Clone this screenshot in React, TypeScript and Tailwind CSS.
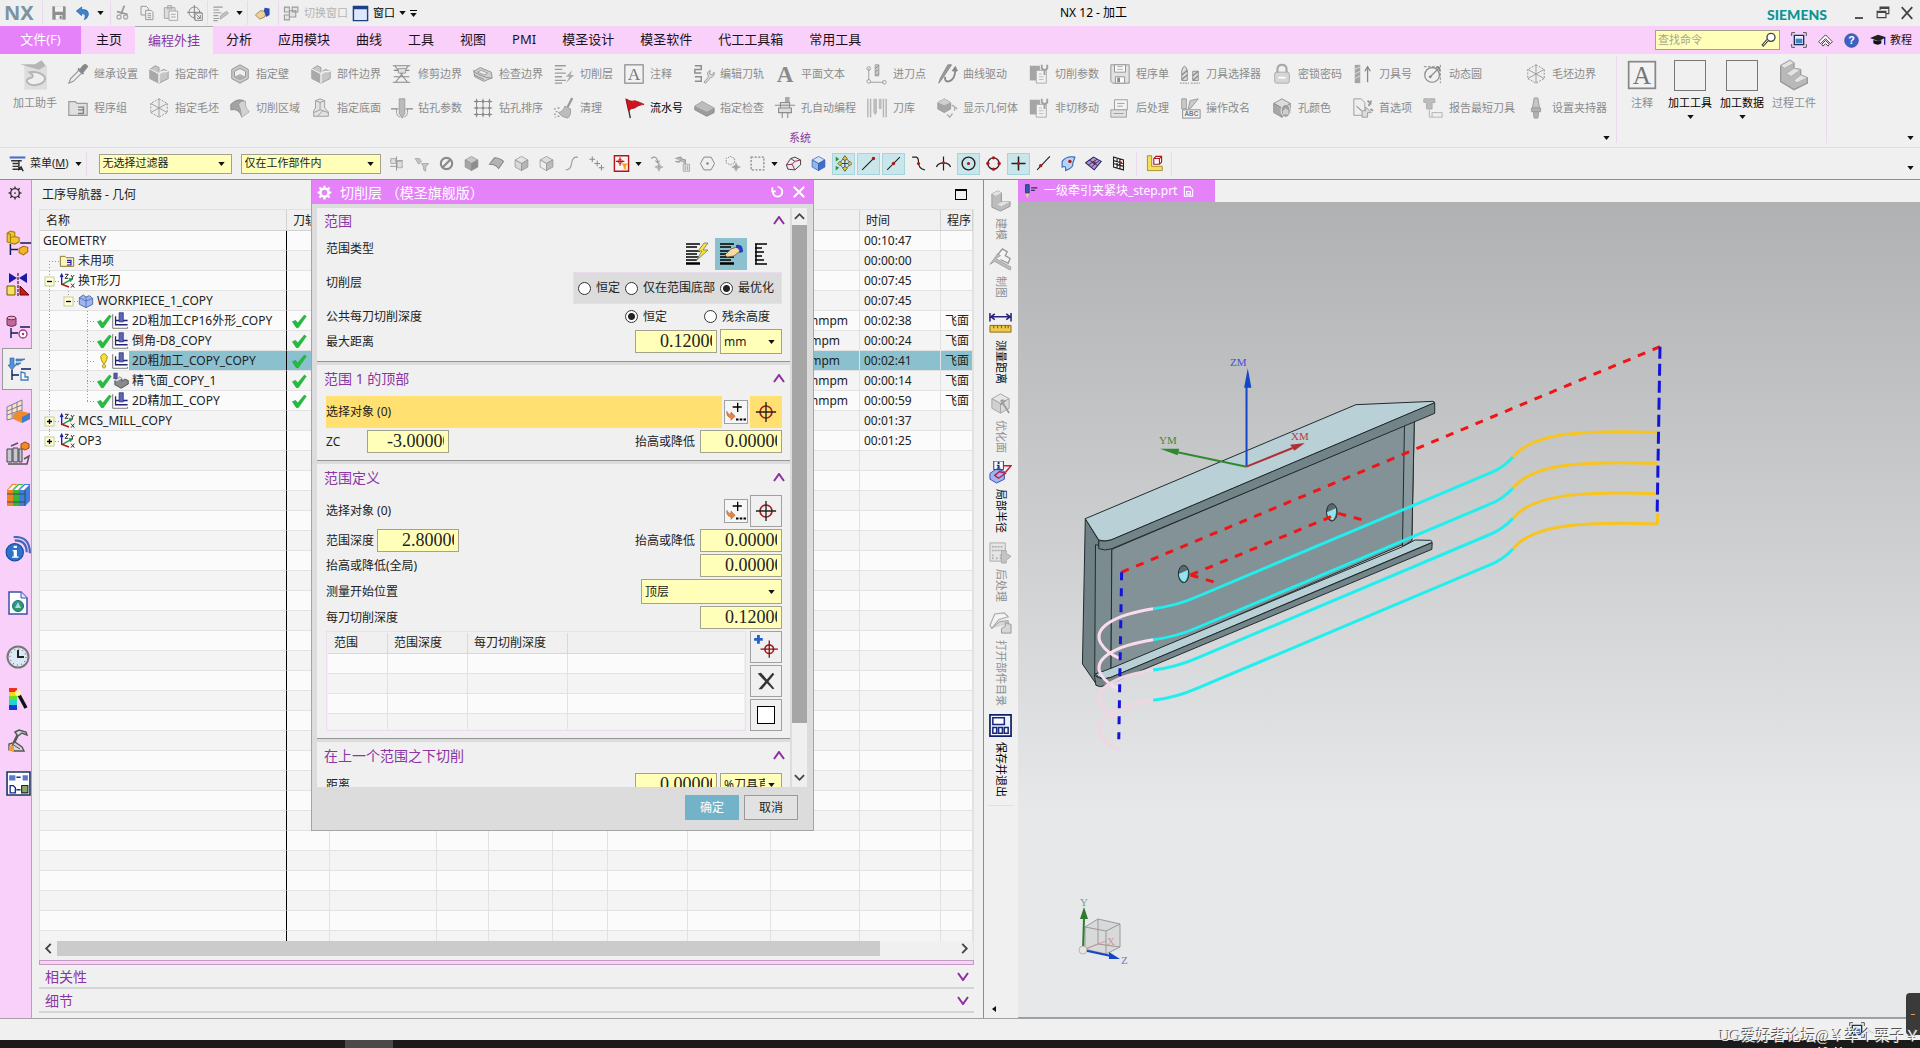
import React, { ReactNode } from "react";

type P = { children?: ReactNode };

const Svg = ({ s = 24, className = "", children }: { s?: number; className?: string } & P) => (
  <svg viewBox="0 0 24 24" width={s} height={s} fill="none" className={"shrink-0 " + className} aria-hidden="true">
    {children}
  </svg>
);

const Cube = ({ t = "#dcdcdc", l = "#a8a8a8", r = "#c4c4c4", k = "#8d8d8d" }: { t?: string; l?: string; r?: string; k?: string }) => (
  <g stroke={k} strokeWidth="1" strokeLinejoin="round">
    <path d="M12 2L21 7L12 12L3 7Z" fill={t} />
    <path d="M3 7L12 12V22L3 17Z" fill={l} />
    <path d="M21 7L12 12V22L21 17Z" fill={r} />
  </g>
);

const Caret = ({ className = "" }: { className?: string }) => (
  <svg viewBox="0 0 8 5" width="7" height="4" className={"shrink-0 " + className} aria-hidden="true">
    <path d="M0 0H8L4 5Z" fill="#111" />
  </svg>
);

const Chevron = ({ down = false }: { down?: boolean }) => (
  <svg viewBox="0 0 12 9" width="12" height="9" fill="none" aria-hidden="true">
    <path d={down ? "M1 1L6 8L11 1" : "M1 8L6 1L11 8"} stroke="#8d2fa0" strokeWidth="2" />
  </svg>
);

const g = "#9a9a9a";

const ic: Record<string, ReactNode> = {
  pipette: (
    <>
      <path d="M2 22L4 17L13 8L16 11L7 20Z" fill="#eee" stroke={g} strokeWidth="1.3" />
      <path d="M12 6L18 12M14 8L18 3Q21 1 22 4L17 10Z" stroke="#888" fill="#888" strokeWidth="2" />
    </>
  ),
  folder: (
    <>
      <path d="M2 20V5H9L11 7H22V20Z" fill="#e0e0e0" stroke={g} strokeWidth="1.3" />
      <path d="M12 11H18V18H12M12 14H18" stroke="#808080" strokeWidth="1.5" />
    </>
  ),
  part: (
    <>
      <path d="M2 7L8 3L12 5V10L17 7L22 9V17L12 22L2 17Z" fill="#c6c6c6" stroke={g} />
      <path d="M2 7L12 12V22M12 10L22 9M12 12L17 9" stroke="#f0f0f0" strokeWidth="1.5" />
      <path d="M2 7L11 12V21L2 17Z" fill="#a9a9a9" />
    </>
  ),
  dots: (
    <>
      <path d="M12 2L21 7V17L12 22L3 17V7Z" stroke="#888" strokeDasharray="2 1.5" fill="#ededed" />
      <path d="M3 7L12 12L21 7M12 12V22M12 2V12M3 17L12 12L21 17" stroke={g} />
    </>
  ),
  hex: (
    <>
      <path d="M12 2L21 7V17L12 22L3 17V7Z" fill="#c9c9c9" stroke="#8e8e8e" />
      <path d="M12 6L18 9V15L12 18L6 15V9Z" fill="#f0f0f0" stroke="#8e8e8e" />
      <path d="M6 15L12 12L18 15L12 18Z" fill="#b0b0b0" />
    </>
  ),
  surf: (
    <>
      <path d="M2 8Q10 0 18 5Q17 12 22 16L14 22Q11 12 2 14Z" fill="#a3a3a3" stroke="#8a8a8a" />
      <path d="M11 8Q13 4 18 5Q17 12 22 16L14 22Q14 14 11 8Z" fill="#d2d2d2" />
    </>
  ),
  floor: (
    <>
      <path d="M6 4L11 2L16 4V12L20 16V21H4V15L6 12Z" fill="#e3e3e3" stroke={g} />
      <path d="M6 4L11 6L16 4M11 6V14M4 17L11 14L20 17M8 21L14 15" stroke={g} />
    </>
  ),
  trim: (
    <>
      <path d="M2 3H21M2 21H21M4 3L18 21M19 3L5 21M3 8H20M3 15H20" stroke="#888" strokeWidth="1.2" />
      <path d="M8 6H16V11H8Z" fill="#ddd" stroke={g} />
    </>
  ),
  drill: (
    <>
      <path d="M0 13H8M16 13H24" stroke="#888" strokeWidth="1.5" />
      <path d="M9 2H15V18L12 23L9 18Z" fill="#bbb" stroke={g} />
      <path d="M6 13V17Q6 21 10 22M18 13V17Q18 21 14 22" stroke={g} />
    </>
  ),
  check: (
    <>
      <path d="M2 9L9 5L21 10L22 16L13 20L3 15Z" fill="#d0d0d0" stroke="#8f8f8f" />
      <path d="M6 10L10 8L17 11L14 13Z" fill="#f1f1f1" stroke="#999" />
      <path d="M1 8Q6 14 22 17M2 13L13 18" stroke="#8f8f8f" />
    </>
  ),
  grid: (
    <>
      <path d="M5 2V22M12 2V22M19 2V22M2 5H22M2 12H22M2 19H22" stroke="#8d8d8d" strokeWidth="1.1" />
      {[5, 12, 19].map((x) => [5, 12, 19].map((y) => <circle key={x + "-" + y} cx={x} cy={y} r="1.5" fill="#8a8a8a" />))}
    </>
  ),
  layers: (
    <>
      <path d="M2 3H14M2 7H10M2 11H14M2 15H10M2 19H14M2 22H10" stroke="#9c9c9c" strokeWidth="1.4" />
      <path d="M21 8L14 15H18L14 22L23 13H19Z" fill="#aaa" />
    </>
  ),
  editLayers: (
    <>
      <path d="M2 3H15M2 7H10M2 11H13M2 15H9M2 19H10M2 22H8" stroke="#9c9c9c" strokeWidth="1.6" />
      <path d="M11 18L14 13L21 9L23 12L16 17L12 20Z" fill="#c4c4c4" stroke="#999" />
    </>
  ),
  broom: (
    <>
      <path d="M21 1L16 11" stroke="#999" strokeWidth="2.5" />
      <path d="M13 10L19 13Q20 20 16 23Q9 22 6 17Q11 16 13 10Z" fill="#bdbdbd" stroke="#999" />
      <path d="M1 13H3M3 16H5M1 19H3M5 21H7M2 22H3M5 12H7" stroke="#999" strokeWidth="1.5" />
    </>
  ),
  abox: (
    <>
      <rect x="2" y="2" width="20" height="20" fill="#f2f2f2" stroke="#888" strokeWidth="1.3" />
      <text x="12" y="19" textAnchor="middle" fontSize="19" fontFamily="Liberation Serif, serif" fill="#777">A</text>
    </>
  ),
  flag: (
    <>
      <path d="M4 3L8 23" stroke="#333" strokeWidth="1.5" />
      <path d="M3 2Q9 6 13 4Q17 5 23 8Q16 9 13 12Q9 12 6 15Z" fill="#d3121c" stroke="#7a0a0a" strokeWidth=".7" />
    </>
  ),
  editpath: (
    <>
      <path d="M2 3H9V7H2V11H9M2 15H9V20H2" stroke="#8d8d8d" strokeWidth="1.6" />
      <path d="M12 21L17 15Q14 10 19 8L18 12L21 13L23 10Q24 15 19 16L14 22Z" fill="#ddd" stroke={g} />
    </>
  ),
  slab: (
    <>
      <path d="M2 10L10 5L23 12V17L15 21L2 14Z" fill="#9b9b9b" stroke="#888" />
      <path d="M2 10L10 5L23 12L15 16Z" fill="#bcbcbc" />
    </>
  ),
  bigA: <text x="12" y="20" textAnchor="middle" fontSize="23" fontWeight="bold" fontFamily="Liberation Serif, serif" fill="#8a8a8a">A</text>,
  hole: (
    <>
      <path d="M12 0H17V6H12Z" fill="#aaa" />
      <path d="M1 9H23M5 12H19V17H5ZM9 17V23M15 17V23M7 6H17V12H7Z" stroke="#8d8d8d" fill="#ddd" strokeWidth="1.2" />
    </>
  ),
  entry: (
    <>
      <path d="M10 2H14V14H10Z" fill="#ccc" stroke={g} />
      <path d="M10 6L14 3M10 10L14 7M10 14L14 11" stroke="#888" />
      <path d="M3 6V21H19" stroke={g} />
      <circle cx="3" cy="6" r="2" stroke={g} />
      <circle cx="3" cy="20" r="2" fill="#eee" stroke={g} />
      <circle cx="20" cy="21" r="2" stroke={g} />
    </>
  ),
  mag: (
    <>
      <path d="M2 2V22M5 2V22" stroke="#b5b5b5" strokeWidth="1.6" />
      <path d="M8 2H12V17L10 20L8 17ZM14 2H17V13H14Z" fill="#bdbdbd" />
      <path d="M19 2V22M22 2V22" stroke="#b5b5b5" strokeWidth="1.6" />
    </>
  ),
  curve: (
    <>
      <path d="M3 22L7 17L17 2L13 2L5 16Z" fill="#999" stroke="#8a8a8a" />
      <path d="M10 15Q9 21 14 20Q21 18 21 7M18 9L21 5L23 9" stroke="#888" strokeWidth="2" />
    </>
  ),
  show: (
    <>
      <path d="M9 2L16 6V13L9 17L2 13V6Z" fill="#a6a6a6" stroke="#999" />
      <path d="M9 2L16 6L9 9L2 6Z" fill="#cfcfcf" />
      <path d="M17 9Q22 10 20 15M21 11L23 13M12 19L15 22L18 18" stroke="#b0b0b0" strokeWidth="1.6" />
    </>
  ),
  param: (
    <>
      <path d="M2 3H13V19H2Z" fill="#a5a5a5" />
      <path d="M9 8H20V22H9Z" fill="#f1f1f1" stroke="#aaa" />
      <path d="M15 2V6Q18 9 21 6V2M18 8V13" stroke="#a0a0a0" strokeWidth="2" />
      <path d="M12 12H15M12 15H17M12 18H17" stroke="#bbb" />
    </>
  ),
  floppy: (
    <>
      <path d="M2 2H22V22H4L2 20Z" fill="#e2e2e2" stroke="#8f8f8f" />
      <path d="M6 2H18V10H6ZM7 15H17V22H7Z" fill="#fafafa" stroke="#8f8f8f" />
      <path d="M9 4H15M9 7H15" stroke="#aaa" />
      <path d="M9 16H12V21H9Z" fill="#888" />
    </>
  ),
  post: (
    <>
      <path d="M6 3H20V14H6Z" fill="#f4f4f4" stroke={g} />
      <path d="M2 14H19V22H2ZM5 18H16M9 7H17M9 10H15" stroke={g} fill="#e1e1e1" />
    </>
  ),
  tools: (
    <>
      <path d="M3 8Q6 -1 9 8V19H3ZM15 9H21V19H15Z" fill="#ddd" stroke="#888" />
      <path d="M3 13L9 8M3 18L9 13M15 14L21 9M15 19L21 14" stroke="#888" strokeWidth="1.4" />
      <path d="M1 22H11M13 22H23" stroke="#888" strokeDasharray="2 1" />
    </>
  ),
  rename: (
    <>
      <path d="M3 2H8V13H3ZM12 4L21 2L13 12L10 13Z" fill="#c9c9c9" stroke={g} />
      <rect x="4" y="14" width="19" height="9" fill="#f3f3f3" stroke="#888" />
      <text x="13.5" y="21" textAnchor="middle" fontSize="7" fontWeight="bold" fontFamily="Liberation Sans, sans-serif" fill="#777">ABC</text>
    </>
  ),
  lock: (
    <>
      <path d="M7 11V7Q7 2 12 2Q17 2 17 7V11" stroke="#aaa" strokeWidth="2.4" />
      <rect x="4" y="10" width="16" height="12" rx="2" fill="#d6d6d6" stroke="#aaa" />
      <path d="M8 16H16" stroke="#fff" strokeWidth="2" />
    </>
  ),
  holecol: (
    <>
      <Cube />
      <ellipse cx="16" cy="15" rx="5" ry="7" fill="#9d9d9d" stroke="#eee" />
      <path d="M13 15L16 12L19 15V19H13Z" fill="#cfcfcf" />
    </>
  ),
  toolno: (
    <>
      <path d="M3 2H9V22H3Z" fill="#a5a5a5" />
      <path d="M3 7L9 4M3 12L9 9M3 17L9 14" stroke="#ddd" />
      <path d="M17 21V5M14 9L17 4L20 9" stroke="#888" strokeWidth="1.4" />
    </>
  ),
  pref: (
    <>
      <path d="M2 2H10L14 6V20H2Z" fill="#eee" stroke="#999" />
      <path d="M5 10L11 16V22H17V17H21L15 11V15H11Z" fill="#ddd" stroke="#999" />
      <path d="M17 4L21 8M21 4L18 10M20 13L23 15" stroke="#999" strokeWidth="2" />
    </>
  ),
  dynCircle: (
    <>
      <circle cx="11" cy="13" r="8" stroke="#888" strokeWidth="1.3" />
      <path d="M2 4H20M20 2V22" stroke="#888" strokeDasharray="3 1.5" />
      <path d="M9 15L19 5M15 5H19V9" stroke="#888" strokeWidth="1.3" />
      <circle cx="9" cy="15" r="1.5" fill="#888" />
    </>
  ),
  report: (
    <>
      <path d="M2 2H14V6H11V13H5V6H2Z" fill="#bdbdbd" stroke="#aaa" />
      <path d="M11 22V17H22V22ZM8 14V22H11" stroke="#b0b0b0" fill="#eee" />
    </>
  ),
  holder: (
    <>
      <path d="M10 1H14L16 12H8Z" fill="#c4c4c4" stroke={g} />
      <path d="M7 12H17V16H7ZM9 16H15L14 23H10Z" fill="#b2b2b2" stroke={g} />
    </>
  ),
};

const ribbonColumns: [string, string][][] = [
  [["继承设置", "pipette"], ["程序组", "folder"]],
  [["指定部件", "part"], ["指定毛坯", "dots"]],
  [["指定壁", "hex"], ["切削区域", "surf"]],
  [["部件边界", "part"], ["指定底面", "floor"]],
  [["修剪边界", "trim"], ["钻孔参数", "drill"]],
  [["检查边界", "check"], ["钻孔排序", "grid"]],
  [["切削层", "layers"], ["清理", "broom"]],
  [["注释", "abox"], ["流水号", "flag"]],
  [["编辑刀轨", "editpath"], ["指定检查", "slab"]],
  [["平面文本", "bigA"], ["孔自动编程", "hole"]],
  [["进刀点", "entry"], ["刀库", "mag"]],
  [["曲线驱动", "curve"], ["显示几何体", "show"]],
  [["切削参数", "param"], ["非切移动", "param"]],
  [["程序单", "floppy"], ["后处理", "post"]],
  [["刀具选择器", "tools"], ["操作改名", "rename"]],
  [["密锁密码", "lock"], ["孔颜色", "holecol"]],
  [["刀具号", "toolno"], ["首选项", "pref"]],
  [["动态圆", "dynCircle"], ["报告最短刀具", "report"]],
  [["毛坯边界", "dots"], ["设置夹持器", "holder"]],
];

const Sep = ({ className = "" }: { className?: string }) => <span className={"w-px shrink-0 bg-[#ecd8ee] " + className} />;

function TitleBar() {
  const q = "flex h-6 w-6 items-center justify-center";
  return (
    <header className="grid h-[26px] grid-cols-[53fr_43fr] items-center bg-[#efefef] text-[12px]">
      <div className="flex items-center">
        <span className="w-[42px] pl-1 text-[20px] leading-6 font-bold text-[#7b93a3]">NX</span>
        <Sep className="h-6" />
        <button className={q + " ml-1"} aria-label="保存">
          <Svg s={16}><path d="M2 2H22V22H2Z" fill="#8f8f8f" /><path d="M6 2H18V10H6ZM7 15H17V22H7Z" fill="#f2f2f2" /><path d="M13 16H16V21H13Z" fill="#888" /></Svg>
        </button>
        <button className={q} aria-label="撤销">
          <Svg s={16}><path d="M2 9L10 3V7Q21 6 20 15Q19 20 14 22Q18 14 10 12V16Z" fill="#3f86cf" stroke="#1d57a0" /></Svg>
        </button>
        <Caret className="ml-0.5" />
        <Sep className="ml-1.5 h-6" />
        <button className={q} aria-label="剪切">
          <Svg s={16}><path d="M14 1L9 14M3 10L19 14" stroke="#999" strokeWidth="2.5" /><circle cx="6" cy="18" r="3" stroke="#aaa" strokeWidth="2" /><circle cx="16" cy="18" r="3" stroke="#aaa" strokeWidth="2" /></Svg>
        </button>
        <button className={q} aria-label="复制">
          <Svg s={16}><path d="M3 2H11L14 5V15H3Z" fill="#eee" stroke="#999" strokeWidth="1.5" /><path d="M10 8H18L21 11V22H10ZM13 13H18M13 16H18M13 19H18" fill="#eee" stroke="#999" strokeWidth="1.5" /></Svg>
        </button>
        <button className={q} aria-label="粘贴">
          <Svg s={16}><path d="M2 4H18V20H2ZM7 1H13V6H7Z" fill="#ddd" stroke="#aaa" strokeWidth="1.5" /><path d="M9 9H22V23H9ZM12 14H19M12 18H19" fill="#f2f2f2" stroke="#aaa" strokeWidth="1.5" /></Svg>
        </button>
        <button className={q} aria-label="重复命令">
          <Svg s={16}><circle cx="11" cy="11" r="8" stroke="#888" strokeWidth="1.5" /><path d="M11 0V22M0 11H22" stroke="#888" strokeWidth="1.5" /><path d="M12 12H23V23H12ZM14 14L20 20M20 15V20H15" fill="#eee" stroke="#888" strokeWidth="1.5" /></Svg>
        </button>
        <Sep className="h-6" />
        <button className={q} aria-label="编辑"><Svg s={17}>{ic.editLayers}</Svg></button>
        <Caret className="ml-1" />
        <Sep className="ml-1 h-6" />
        <button className={q + " ml-0.5"} aria-label="触控">
          <Svg s={17}><path d="M2 14L9 8L18 9L15 17L8 20Z" fill="#f0cf98" stroke="#8a6a30" /><path d="M15 4L22 5L22 14L17 17L14 8Z" fill="#2c4bb0" /></Svg>
        </button>
        <Sep className="mr-1 ml-1 h-6" />
        <button className="flex items-center text-[11px] text-[#b4b4b4]">
          <Svg s={17}><path d="M2 3H9V10H2ZM13 3H21V10H13ZM2 14H9V21H2ZM9 8H18V17H9Z" fill="#e4e4e4" stroke="#999" strokeWidth="1.5" /></Svg>
          <span className="ml-1">切换窗口</span>
        </button>
        <button className="ml-1 flex items-center gap-1 text-[11px] text-black">
          <Svg s={17}><path d="M2 2H22V22H2Z" fill="#dce9fb" stroke="#1d3f86" strokeWidth="2" /><path d="M2 2H22V6H2Z" fill="#1d3f86" /></Svg>
          窗口 <Caret />
        </button>
        <button className="ml-1 flex flex-col items-center gap-0.5" aria-label="更多"><i className="h-px w-[7px] bg-black" /><Caret /></button>
      </div>
      <div className="flex items-center">
        <h1 className="mr-auto text-[12px] whitespace-nowrap text-black">NX 12 - 加工</h1>
        <span className="mt-1 mr-[20px] font-[Lato] text-[14px] leading-5 font-black text-[#0b9494]">SIEMENS</span>
        <button className="flex h-6 w-6 items-center justify-center" aria-label="最小化"><i className="mt-2.5 h-[2px] w-[8px] bg-[#555]" /></button>
        <button className="flex h-6 w-6 items-center justify-center" aria-label="还原">
          <Svg s={14}><path d="M7 7V2H22V13H17M2 9H17V20H2ZM2 11H17M7 4H22" stroke="#444" strokeWidth="2" /></Svg>
        </button>
        <button className="mr-px flex h-6 w-6 items-center justify-center" aria-label="关闭">
          <Svg s={14}><path d="M3 2L21 22M21 2L3 22" stroke="#444" strokeWidth="3" /></Svg>
        </button>
      </div>
    </header>
  );
}

const Restore = () => (
  <Svg s={16}>
    <path d="M1 6V1H6M18 1H23V6M23 18V23H18M6 23H1V18" stroke="#555" strokeWidth="1.5" />
    <path d="M5 5H19V19H5Z" fill="#e8f2ff" stroke="#17324f" strokeWidth="2" />
    <path d="M7 10H17V17H7Z" fill="#4583c9" />
  </Svg>
);

function Tabs() {
  const tabs = ["主页", "编程外挂", "分析", "应用模块", "曲线", "工具", "视图", "PMI", "模圣设计", "模圣软件", "代工工具箱", "常用工具"];
  return (
    <nav className="flex h-[28px] items-stretch bg-[#f9d0f9] text-[13px] text-[#1a1020]">
      <button className="mr-[2px] w-[81px] bg-[#e682f9] text-white">文件(F)</button>
      {tabs.map((t) => (
        <button key={t} className={t === "编程外挂" ? "border-t border-[#aaa] bg-[#f0f0f0] px-[13px] text-[#8a35a3]" : "px-[13px]"}>
          {t}
        </button>
      ))}
      <div className="ml-auto flex items-center gap-[11px] pr-2 text-[11px]">
        <label className="flex h-[20px] w-[125px] items-center border border-[#a3a38c] bg-[#ffffba]">
          <input className="w-full min-w-0 bg-transparent pl-0.5 text-[11px] placeholder:text-[#a5a58a]" placeholder="查找命令" aria-label="查找命令" />
          <Svg s={16} className="mr-0.5"><circle cx="15" cy="8" r="6" fill="#fff" stroke="#444" strokeWidth="2" /><path d="M10 12L2 21" stroke="#444" strokeWidth="4" /><path d="M10 12L3 20" stroke="#eee" strokeWidth="1.5" /></Svg>
        </label>
        <button aria-label="全屏"><Restore /></button>
        <button aria-label="最小化功能区"><Svg s={15}><path d="M12 3L23 14L20 17L12 9L4 17L1 14ZM12 12L18 18L16 21L12 17L8 21L6 18Z" fill="#fff" stroke="#222" strokeWidth="1.3" /></Svg></button>
        <button aria-label="帮助">
          <Svg s={15}><circle cx="12" cy="12" r="11" fill="#3b62c4" stroke="#21408e" /><text x="12" y="18" textAnchor="middle" fontSize="17" fontWeight="bold" fontFamily="Liberation Sans, sans-serif" fill="#fff">?</text></Svg>
        </button>
        <button className="flex items-center gap-1">
          <Svg s={16}><path d="M0 9L12 4L24 8L13 14Z" fill="#222" /><path d="M5 12V17Q12 21 17 17V12L13 14Z" fill="#111" /><path d="M22 9V19" stroke="#22229a" strokeWidth="2" /></Svg>
          教程
        </button>
      </div>
    </nav>
  );
}

function BigButton({ label, icon, dark, caret }: { label: string; icon: ReactNode; dark?: boolean; caret?: boolean }) {
  return (
    <button className={"flex w-[52px] shrink-0 flex-col items-center pt-[5px] text-[11px] leading-4 " + (dark ? "text-black" : "text-[#8b8b8b]")}>
      <span className="flex h-8 items-center">{icon}</span>
      <span className="mt-1 whitespace-nowrap">{label}</span>
      {caret && <Caret className="mt-1" />}
    </button>
  );
}

function Ribbon() {
  return (
    <section className="flex h-[94px] items-stretch border-b border-[#f3d3f3] bg-[#f0f0f0]">
      <div className="flex flex-col pl-[9px]">
        <div className="flex h-[75px]">
          <BigButton
            label="加工助手"
            icon={<Svg s={32}><path d="M4 5H21V23H4Z" fill="#dedede" /><path d="M1 4H12L17 1L20 5L15 8L11 7Z" fill="#b5b5b5" /><path d="M8 10Q15 9 19 13Q21 17 15 19Q8 21 6 17Q5 15 9 14Q12 13 8 10Z" fill="#efefef" stroke="#b5b5b5" strokeWidth="1.5" /></Svg>}
          />
          <div className="ml-[6px] flex pt-[3px]">
            {ribbonColumns.map((col, i) => (
              <div key={i} className="flex flex-col pr-[10px] last:pr-[7px]">
                {col.map(([t, n]) => (
                  <button key={t} className={"flex h-[34px] items-center gap-[5px] text-[11px] whitespace-nowrap " + (t === "流水号" ? "text-black" : "text-[#8b8b8b]")}>
                    <Svg s={n === "bigA" ? 24 : 22} className={n === "bigA" ? "-mx-px" : ""}>{ic[n]}</Svg>
                    {t}
                  </button>
                ))}
              </div>
            ))}
          </div>
        </div>
        <div className="flex items-center text-[11px] leading-[18px] text-[#8a35a3]">
          <span className="flex-1 pr-[12px] text-center">系统</span>
          <Caret className="mr-[4px]" />
        </div>
      </div>
      <Sep className="mt-0.5 mb-1 ml-[2px]" />
      <div className="flex">
        <div className="-ml-px flex w-12"><BigButton label="注释" icon={<Svg s={32}>{ic.abox}</Svg>} /></div>
        <BigButton label="加工工具" dark caret icon={<i className="h-[31px] w-[32px] border border-[#777]" />} />
        <BigButton label="加工数据" dark caret icon={<i className="h-[31px] w-[32px] border border-[#777]" />} />
        <BigButton
          label="过程工件"
          icon={<Svg s={32}><path d="M2 5L9 1L12 3V7L17 8V12L22 14V18L12 23L2 17Z" fill="#b9b9b9" stroke="#999" /><path d="M2 5L9 1L12 3L5 7ZM6 11L12 7L17 8L10 13ZM12 16L17 12L22 14L14 18Z" fill="#e3e3e3" stroke="#aaa" strokeWidth=".6" /></Svg>}
        />
      </div>
      <Sep className="mt-0.5 mb-1 ml-[6px]" />
      <Caret className="mt-[82px] mr-[6px] ml-auto" />
    </section>
  );
}

const Combo = ({ label, value, className, textClass = "text-[11px]" }: { label: string; value: string; className: string; textClass?: string }) => (
  <span className={"relative flex shrink-0 items-center border border-[#a3a38c] bg-[#ffffba] " + className}>
    <select aria-label={label} defaultValue={value} className={"h-full w-full appearance-none bg-transparent pl-[3px] outline-none " + textClass}>
      <option>{value}</option>
    </select>
    <Caret className="pointer-events-none absolute right-[6px]" />
  </span>
);

const red = "#b01818";
type SelIcon = { n: string; d: ReactNode; on?: boolean; after?: "caret" };
const selIcons: SelIcon[] = [
  { n: "装配过滤", d: <><path d="M12 2V22M3 8H21M3 16H21" stroke={g} strokeWidth="1.4" /><path d="M4 5H11V12H4ZM13 9H20V18H13Z" fill="#ddd" stroke={g} /></> },
  { n: "细节过滤", d: <><path d="M3 5H9L12 9L8 13ZM12 12H22L18 17V23L15 21V17Z" fill="#c5c5c5" stroke={g} /></> },
  { n: "禁用", d: <><circle cx="12" cy="12" r="8" stroke="#8a8a8a" strokeWidth="3" /><path d="M6 18L18 6" stroke="#8a8a8a" strokeWidth="3" /></> },
  { n: "实体", d: <Cube l="#a5a5a5" r="#8d8d8d" t="#c8c8c8" /> },
  { n: "面", d: <path d="M2 13L9 4Q16 4 22 9L15 19Q11 13 2 13Z" fill="#b3b3b3" stroke="#8a8a8a" strokeWidth="1.5" /> },
  { n: "体", d: <Cube l="#d8d8d8" r="#b5b5b5" t="#e4e4e4" /> },
  { n: "边", d: <Cube l="#eee" r="#bbb" t="#ddd" /> },
  { n: "曲线", d: <path d="M4 21Q11 21 12 12Q13 2 21 3" stroke={g} strokeWidth="1.6" /> },
  { n: "点", d: <path d="M6 2V10M2 6H10M13 8V16M9 12H17M19 14V22M15 18H23" stroke="#888" strokeWidth="1.4" /> },
  { n: "捕捉过滤", after: "caret", d: <><path d="M2 1H22V23H2Z" fill="#fff4f4" stroke="#b01818" strokeWidth="2" /><path d="M10 3V15M4 9H16" stroke={red} strokeWidth="1.6" /><circle cx="10" cy="9" r="3" stroke={red} /><path d="M12 12H21L18 16V21L15 19V16Z" fill="#f3a01c" /></> },
  { n: "移动", d: <><path d="M3 5Q10 0 12 8L12 10M9 8L12 11L15 8M14 11V23M8 17H20" stroke={g} strokeWidth="1.6" /><circle cx="14" cy="17" r="3" stroke={g} /></> },
  { n: "删除选择", d: <><path d="M2 5L9 3L12 6L16 7V13M2 9L7 10L10 7" stroke={g} fill="#bbb" strokeWidth="1.6" /><path d="M13 13H22V23H13ZM16 15V21M19 15V21" fill="#ddd" stroke={g} /></> },
  { n: "六边形", d: <><path d="M7 3H17L22 12L17 21H7L2 12Z" stroke="#888" strokeWidth="1.4" /><circle cx="12" cy="12" r="1.8" fill="#888" /></> },
  { n: "虚线选择", d: <><path d="M9 2L15 5V11L9 14L3 11V5Z" stroke="#888" strokeDasharray="2 1.5" strokeWidth="1.4" /><path d="M17 11V23M11 17H23" stroke="#888" strokeWidth="1.4" /><circle cx="17" cy="17" r="3" stroke="#888" /></> },
  { n: "矩形选择", after: "caret", d: <path d="M3 3H21V21H3Z" stroke="#888" strokeDasharray="3 2" strokeWidth="1.8" /> },
  { n: "着色边", d: <><path d="M2 14L8 5L14 3L22 7V14L14 21L4 20Z" fill="#eceaf4" stroke="#444" strokeWidth="1.4" /><path d="M2 14L10 13L14 9L22 7M10 13L14 21M8 5L14 9" stroke="#8a2030" strokeWidth="1.3" /></> },
  { n: "着色", d: <Cube t="#cfe3fb" l="#8fb8ee" r="#3c6fd0" k="#3557a8" /> },
  { n: "捕捉点", on: true, d: <><path d="M1 2V9L6 6ZM1 22V15L6 18Z" fill="#249a38" /><path d="M14 3V21M5 12H23" stroke="#333" strokeWidth="1.3" /><circle cx="14" cy="12" r="6.500" stroke="#333" /><path d="M14 1L17 5L14 8L11 5ZM14 16L17 19L14 23L11 19ZM4 12L7 9L10 12L7 15ZM18 12L21 9L24 12L21 15Z" fill="#e9cf2c" stroke="#333" /></> },
  { n: "端点", on: true, d: <><path d="M3 21L20 4" stroke="#222" strokeWidth="1.6" /><circle cx="19" cy="5" r="2.4" fill={red} /></> },
  { n: "中点", on: true, d: <><path d="M3 21L21 3" stroke="#222" strokeWidth="1.6" /><circle cx="12" cy="12" r="2.4" fill={red} /></> },
  { n: "控制点", d: <><path d="M3 3H9Q12 4 12 10Q12 20 21 21" stroke="#222" strokeWidth="1.7" /><circle cx="12" cy="12" r="2.2" fill={red} /></> },
  { n: "交点", d: <><path d="M12 2V22M2 17Q4 11 12 11Q20 11 22 17" stroke="#222" strokeWidth="1.7" /><circle cx="12" cy="11" r="2.2" fill={red} /></> },
  { n: "圆心", on: true, d: <><circle cx="12" cy="12" r="9" stroke="#222" strokeWidth="2" /><circle cx="12" cy="12" r="2.2" fill={red} /></> },
  { n: "象限点", d: <><circle cx="12" cy="12" r="8" stroke="#222" strokeWidth="1.8" />{[[12, 4], [12, 20], [4, 12], [20, 12]].map(([x, y]) => <circle key={x + "," + y} cx={x} cy={y} r="2.4" fill={red} />)}</> },
  { n: "现有点", on: true, d: <><path d="M12 2V22M2 12H22" stroke="#222" strokeWidth="2.2" /><circle cx="12" cy="12" r="2" fill={red} /></> },
  { n: "曲线上的点", d: <><path d="M3 21L21 2" stroke="#222" strokeWidth="1.6" /><circle cx="8" cy="15" r="2.4" fill={red} /></> },
  { n: "面上的点", d: <><path d="M3 9Q9 1 21 3L18 12Q20 17 8 22Q9 14 3 17Z" fill="#b6d3f6" stroke="#3262b0" strokeWidth="1.5" /><circle cx="14" cy="9" r="2.4" fill={red} /></> },
  { n: "小平面顶点", d: <><path d="M1 11L12 3L23 9L13 21Z" fill="#a79bd0" stroke="#2d2360" strokeWidth="1.5" /><path d="M5 14L17 6M6 7L18 15M9 17L20 8" stroke="#2d2360" strokeWidth="1.300" /><circle cx="13" cy="11" r="2.2" fill={red} /></> },
  { n: "网格点", d: <><path d="M5 3L19 7V21L5 17ZM10 4V19M14 6V20M5 8L19 12M5 12L19 16" fill="#fff" stroke="#222" strokeWidth="1.6" /><circle cx="15" cy="11" r="2.2" fill={red} /></> },
];

function SelectionBar() {
  return (
    <section className="flex h-[32px] items-center border-b border-[#8f8a98] bg-[#f0f0f0] text-[11px]">
      <button className="ml-[9px] flex items-center gap-1 whitespace-nowrap">
        <Svg s={17}><path d="M1 2H23V5H1Z" fill="#4d6fc4" /><path d="M3 8H18M5 12H13M5 16H13M5 20H18" stroke="#333" strokeWidth="2" /><path d="M14 7V20L17 17L20 23" stroke="#222" strokeWidth="2" fill="#fff" /></Svg>
        <span className="text-[11px]">菜单(<u>M</u>)</span>
        <Caret className="ml-0.5" />
      </button>
      <Sep className="mr-3 ml-1 h-6" />
      <Combo label="选择过滤器" value="无选择过滤器" className="h-[20px] w-[133px]" />
      <Combo label="选择范围" value="仅在工作部件内" className="ml-[9px] h-[20px] w-[140px]" />
      <div className="ml-1 flex items-center gap-[2px]">
        {selIcons.map((s) => (
          <React.Fragment key={s.n}>
            <button aria-label={s.n} className={"flex h-[22px] w-[23px] items-center justify-center " + (s.on ? "border border-[#a7d3dc] bg-[#c9e6ea]" : "")}>
              <Svg s={17}>{s.d}</Svg>
            </button>
            {s.after && <Caret className="mr-[2px]" />}
          </React.Fragment>
        ))}
      </div>
      <Sep className="mx-[6px] h-6" />
      <button aria-label="测量" className="flex w-[23px] justify-center">
        <Svg s={17}><path d="M2 1V22H23V16H8V1Z" fill="#f3df59" stroke="#8a7410" /><path d="M11 5L14 2H22V10L19 13H11ZM11 5H19V13M19 5L22 2" stroke={red} strokeWidth="1.6" fill="#fff" /></Svg>
      </button>
      <Sep className="ml-[5px] h-6" />
      <Caret className="mt-2 mr-[6px] ml-auto" />
    </section>
  );
}

const Csys = () => (
  <Svg s={16}>
    <path d="M4 18V4M2 6L4 2L6 6" stroke="#2020b0" strokeWidth="2" />
    <path d="M5 17L18 10M15 9L19 9L17 13" stroke="#1f9a3a" strokeWidth="2" />
    <path d="M4 17L15 21" stroke={red} strokeWidth="2.5" />
    <path d="M9 2H14L9 8H14M18 3L20 6L23 3M20 6V10M18 16L23 22M23 16L18 22" stroke="#333" strokeWidth="1.5" />
  </Svg>
);
const OpIcon = ({ solid }: { solid?: boolean }) =>
  solid ? (
    <Svg s={17}><path d="M2 1H8V10H2Z" fill="#54549c" /><path d="M4 12L11 7L14 9V13L18 10L23 12V17L13 23L4 18Z" fill="#8a8a8a" stroke="#333" /><path d="M11 7L14 9L7 13L4 12Z" fill="#ddd" /></Svg>
  ) : (
    <Svg s={17}><path d="M1 3V23H22V21" fill="#fff" stroke="#777" strokeWidth="1.4" /><path d="M5 6V18H22M5 12H10M15 12H22" stroke="#23236d" strokeWidth="1.8" /><path d="M10 1H16V14H10Z" fill="#5a67b5" stroke="#2b2f7d" /></Svg>
  );
const Tick = () => (
  <Svg s={16}><path d="M2 13L7 11L10 15L20 3L23 5L11 22H8Z" fill="#23bf3c" stroke="#128a28" strokeWidth=".6" /></Svg>
);
const Bang = () => (
  <Svg s={16}><path d="M7 5Q12 -3 17 5Q17 10 13 16H11Q7 10 7 5Z" fill="#f7e03a" stroke="#8f7a10" strokeWidth="1.2" /><circle cx="12" cy="20" r="2.6" fill="#f7e03a" stroke="#8f7a10" /></Svg>
);

type Row = { t: string; lvl: number; time: string; ex?: "+" | "-"; icon?: ReactNode; state?: "ok" | "warn"; sel?: boolean; feed?: string; last?: boolean };
const rows: Row[] = [
  { t: "GEOMETRY", lvl: 0, time: "00:10:47" },
  { t: "未用项", lvl: 1, time: "00:00:00", icon: <Svg s={16}><path d="M2 20V5H9L11 7H22V20Z" fill="#fdf3c0" stroke="#8a7a30" strokeWidth="1.5" /><path d="M12 11H18V18H12M12 14H18" stroke="#2020a0" strokeWidth="1.7" /></Svg> },
  { t: "换T形刀", lvl: 1, time: "00:07:45", ex: "-", icon: <Csys /> },
  { t: "WORKPIECE_1_COPY", lvl: 2, time: "00:07:45", ex: "-", icon: <Svg s={16}><path d="M2 7L8 3L12 6L17 4L22 8V17L12 22L2 17Z" fill="#9db5ea" stroke="#3f5aa8" strokeWidth="1.2" /><path d="M2 7L12 12V22M12 12L22 8M12 6V12" stroke="#3f5aa8" /></Svg> },
  { t: "2D粗加工CP16外形_COPY", lvl: 3, time: "00:02:38", state: "ok", icon: <OpIcon />, feed: "pl-9" },
  { t: "倒角-D8_COPY", lvl: 3, time: "00:00:24", state: "ok", icon: <OpIcon />, feed: "pl-7" },
  { t: "2D粗加工_COPY_COPY", lvl: 3, time: "00:02:41", state: "warn", icon: <OpIcon />, sel: true, feed: "pl-7" },
  { t: "精飞面_COPY_1", lvl: 3, time: "00:00:14", state: "ok", icon: <OpIcon solid />, feed: "pl-9" },
  { t: "2D精加工_COPY", lvl: 3, time: "00:00:59", state: "ok", icon: <OpIcon />, feed: "pl-9", last: true },
  { t: "MCS_MILL_COPY", lvl: 1, time: "00:01:37", ex: "+", icon: <Csys /> },
  { t: "OP3", lvl: 1, time: "00:01:25", ex: "+", icon: <Csys />, last: true },
];
const emptyRows = Array.from({ length: 25 }, (_, i) => i);
const colWidths = ["w-[247px]", "w-[43px]", "w-[107px]", "w-[52px]", "w-[64px]", "w-[55px]", "w-[80px]", "w-[83px]", "w-[89px]", "w-[81px]", "w-[32px]"];

function TreeLines({ r }: { r: Row }) {
  const w = [0, 19, 38, 56][r.lvl];
  const x = [0, 9, 28, 47][r.lvl];
  return (
    <svg width={w} height="20" className="shrink-0" aria-hidden="true">
      <g stroke="#999" strokeDasharray="1 2">
        {r.lvl > 1 && <path d="M9.5 0V20" />}
        <path d={`M${x + 0.5} ${r.t === "未用项" ? 10 : 0}V${r.last || r.lvl === 2 ? 10 : 20}`} />
        <path d={`M${x} 10.5H${w}`} />
      </g>
      {r.ex && (
        <>
          <rect x={x - 4} y="6" width="9" height="9" fill="#ffffd8" stroke="#c9c9a0" />
          <path d={`M${x - 2} 10.5H${x + 3}` + (r.ex === "+" ? `M${x + 0.5} 8V13` : "")} stroke="#000" strokeWidth="1.3" />
        </>
      )}
    </svg>
  );
}

function Navigator() {
  const line = "border-r border-b border-[#e2e2e2] p-0";
  return (
    <section className="flex w-[951px] shrink-0 flex-col bg-[#f0f0f0] pr-[9px] pl-[7px] text-[12px]">
      <div className="flex h-[29px] items-center justify-between pr-[7px] pl-[3px]">
        <h2>工序导航器 - 几何</h2>
        <button aria-label="最大化" className="h-[11px] w-[12px] border border-t-2 border-black" />
      </div>
      <div className="min-h-0 flex-1 overflow-hidden border border-b-0 border-[#f0d8f0]">
        <table className="w-full table-fixed border-separate border-spacing-0 text-[#222]">
          <thead>
            <tr className="h-[21px] text-left">
              {["名称", "刀轨", "", "", "", "", "", "", "", "时间", "程序"].map((h, i) => (
                <th key={i} className={"overflow-hidden border-r border-b border-[#d2d2d2] bg-[#f0f0f0] p-0 pt-px pl-[6px] leading-[19px] font-normal whitespace-nowrap " + colWidths[i]}>{h}</th>
              ))}
            </tr>
          </thead>
          <tbody>
            {rows.map((r, i) => {
              const bg = r.sel ? "bg-[#8bc1ce]" : i % 2 ? "bg-[#f4f4f4]" : "bg-[#fbfbfb]";
              const c = line + " leading-[19px] whitespace-nowrap overflow-hidden " + bg;
              return (
                <tr key={r.t} className="h-[20px]">
                  <td className={"overflow-hidden border-r border-b border-r-black border-b-[#e2e2e2] p-0 " + (i % 2 ? "bg-[#f4f4f4]" : "bg-[#fbfbfb]")}>
                    <div className="flex h-[19px] items-center">
                      {r.lvl > 0 && <TreeLines r={r} />}
                      {r.state && (r.state === "ok" ? <Tick /> : <Bang />)}
                      {r.icon}
                      <span className={"flex-1 pl-[3px] leading-[19px] whitespace-nowrap " + (r.sel ? "bg-[#8bc1ce]" : "")}>{r.t}</span>
                    </div>
                  </td>
                  <td className={c}>{r.state && <span className="block pl-1"><Tick /></span>}</td>
                  {[0, 1, 2, 3, 4, 5].map((k) => <td key={k} className={c} />)}
                  <td className={c + " " + (r.feed ?? "")}>{r.feed ? "mmpm" : ""}</td>
                  <td className={c + " pl-[4px]"}>{r.time}</td>
                  <td className={c + " pl-[4px]"}>{r.state ? "飞面" : ""}</td>
                </tr>
              );
            })}
            {emptyRows.map((i) => (
              <tr key={i} className={"h-[20px] " + (i % 2 ? "bg-[#fbfbfb]" : "bg-[#f4f4f4]")}>
                {colWidths.map((w, k) => <td key={w} className={"border-r border-b p-0 border-b-[#e2e2e2] " + (k === 0 ? "border-r-black" : "border-r-[#e2e2e2]")} />)}
              </tr>
            ))}
          </tbody>
        </table>
      </div>
      <div className="flex h-[19px] items-start border-x border-[#f0d8f0]">
        <button aria-label="向左滚动" className="flex h-[15px] w-[17px] items-center justify-center"><Svg s={11}><path d="M17 2L7 12L17 22" stroke="#444" strokeWidth="4" /></Svg></button>
        <div className="flex-1"><div className="h-[15px] w-11/12 bg-[#cbcbcb]" /></div>
        <button aria-label="向右滚动" className="flex h-[15px] w-[18px] items-center justify-center"><Svg s={11}><path d="M7 2L17 12L7 22" stroke="#444" strokeWidth="4" /></Svg></button>
      </div>
      <div className="h-[5px] border border-[#c29ac4] bg-[#f9d3f6]" />
      {["相关性", "细节"].map((t) => (
        <button key={t} className="flex h-6 items-center justify-between border-b-2 border-[#d4d4d4] pr-[5px] pl-[6px] text-[14px] text-[#8a35a3]">
          {t}
          <Chevron down />
        </button>
      ))}
      <div className="h-[5px]" />
    </section>
  );
}

const LayersGlyph = ({ kind }: { kind: number }) => (
  <Svg s={24}>
    {kind === 2 ? (
      <path d="M2 2H14M2 22H14M2 6H9M2 10H11M2 14H9M2 18H11M3 2V22" stroke="#000" strokeWidth="1.5" />
    ) : (
      <path d="M1 2H15M1 9H15M1 15H15M1 22H15M1 21H15M1 5H12M1 12H12M1 18H12" stroke="#000" strokeWidth="1.5" />
    )}
    {kind === 0 && <path d="M19 1L13 9H17L11 19L23 8H18L23 1Z" fill="#f3e53c" stroke="#666" strokeWidth=".7" />}
    {kind === 1 && <><path d="M6 13L12 7L18 5L21 9L15 14L8 15Z" fill="#f6d9a4" stroke="#7a5a2c" strokeWidth=".8" /><path d="M17 3Q24 1 24 10L20 11Q22 6 17 6Z" fill="#1f3fc0" /></>}
  </Svg>
);

const Target = () => (
  <Svg s={22}><circle cx="12" cy="12" r="6.5" stroke="#a3201a" strokeWidth="1.8" /><path d="M12 1V23M1 12H23" stroke="#222" strokeWidth="1.5" /></Svg>
);

const Num = ({ label, v, neg }: { label: string; v: string; neg?: boolean }) => (
  <input
    aria-label={label}
    defaultValue={v}
    className={"h-[23px] w-[82px] shrink-0 border border-[#a3a38c] bg-[#ffffba] pr-[4px] font-['Liberation_Serif',serif] text-[18px] leading-[20px] text-[#222] outline-none " + (neg ? "pl-[19px]" : "pl-[24px]")}
  />
);

const Radio = ({ name, label, checked, className = "" }: { name: string; label: string; checked?: boolean; className?: string }) => (
  <label className={"flex items-center gap-[5px] whitespace-nowrap " + className}>
    <input type="radio" name={name} defaultChecked={checked} className="h-[13px] w-[13px] appearance-none rounded-full border border-[#333] bg-white checked:bg-[radial-gradient(circle,#222_0_3px,#fff_4px)]" />
    {label}
  </label>
);

const Section = ({ title, children, open }: { title: string; open?: boolean } & P) => (
  <section className={"bg-[#f0f0f0] pr-[8px] pl-[9px] " + (open ? "" : "mb-[3px] border-b border-[#949494] pb-[7px]")}>
    <button className="-mx-[2px] flex h-[27px] w-[461px] items-center justify-between text-[14px] text-[#8a35a3]">
      {title}
      <Chevron />
    </button>
    <div className="flex flex-col gap-[2px] pt-1">{children}</div>
  </section>
);

const Field = ({ label, h = "h-[23px]", children }: { label: ReactNode; h?: string } & P) => (
  <div className={"flex items-center " + h}>
    <span className="whitespace-nowrap">{label}</span>
    <div className="ml-auto flex h-full items-center">{children}</div>
  </div>
);

const sq = "flex h-8 w-8 items-center justify-center border border-[#a0a0a0] bg-[#f0f0f0]";
const PointBtn = () => (
  <button aria-label="点对话框" className="mr-[2px] flex h-6 w-6 items-center justify-center border border-[#a0a0a0] bg-[#f6f6f6]">
    <Svg s={20}><path d="M14 1V12M8 6H19" stroke="#000" strokeWidth="1.6" /><path d="M1 11Q2 15 6 15V12L11 17L6 22V19Q0 18 1 11Z" fill="#e8843c" stroke="#a1521b" strokeWidth=".6" /><path d="M12 21H15M16.500 21H19.500M21 21H24" stroke="#000" strokeWidth="2.2" /></Svg>
  </button>
);

function Dialog() {
  return (
    <div role="dialog" aria-label="切削层" className="absolute top-0 left-[311px] z-10 flex h-[651px] w-[503px] flex-col border border-t-0 border-[#a5a5a5] bg-[#dcdcdc] text-[12px] text-[#222]">
      <div className="flex h-6 shrink-0 items-center bg-[#e682f9] pr-[7px] pl-[5px] text-white">
        <Svg s={15}><circle cx="12" cy="12" r="6.500" stroke="#fff" strokeWidth="4" /><path d="M12 1V5M12 19V23M1 12H5M19 12H23M4 4L7 7M17 17L20 20M20 4L17 7M4 20L7 17" stroke="#fff" strokeWidth="3.500" /></Svg>
        <h2 className="ml-2 flex-1 text-[14px] whitespace-pre">切削层 （模圣旗舰版）</h2>
        <button aria-label="重置"><Svg s={14}><path d="M4 4V11H10M5 10Q5 20 13 20Q21 19 21 11Q20 4 13 3" stroke="#fff" strokeWidth="3" /></Svg></button>
        <button aria-label="关闭" className="ml-2"><Svg s={14}><path d="M3 3L21 21M21 3L3 21" stroke="#fff" strokeWidth="3.500" /></Svg></button>
      </div>
      <div className="mt-1 flex h-[579px] shrink-0 pl-[5px]">
        <div className="w-[473px] overflow-hidden">
          <section className="mb-[3px] border-b border-[#949494] bg-[#f0f0f0] pr-[8px] pb-[7px] pl-[9px]">
            <button className="-mx-[2px] flex h-[25px] w-[461px] items-center justify-between text-[14px] text-[#8a35a3]">
              范围
              <Chevron />
            </button>
            <div className="flex h-[39px] items-start justify-between pt-[5px]">
              <span className="pt-[3px] leading-4">范围类型</span>
              <div className="flex gap-px">
                {[0, 1, 2].map((k) => (
                  <button key={k} aria-label={["自动", "用户定义", "单侧"][k]} className={"flex h-8 items-center justify-center " + (k === 1 ? "w-8 bg-[#8bc1ce]" : "w-[34px]")}><LayersGlyph kind={k} /></button>
                ))}
              </div>
            </div>
            <div className="flex h-8 items-start justify-between">
              <span className="pt-[3px] leading-4">切削层</span>
              <div className="flex h-8 items-center gap-[5px] border border-[#eadcec] bg-[#dcdcdc] pr-[7px] pl-1">
                <Radio name="layer" label="恒定" />
                <Radio name="layer" label="仅在范围底部" />
                <Radio name="layer" label="最优化" checked />
              </div>
            </div>
            <Field h="h-[25px]" label="公共每刀切削深度">
              <Radio name="depth" label="恒定" checked />
              <Radio name="depth" label="残余高度" className="mr-[12px] ml-[37px]" />
            </Field>
            <Field h="h-[25px]" label="最大距离">
              <Num label="最大距离" v="0.12000" />
              <Combo label="单位" value="mm" className="ml-[3px] h-[25px] w-[62px]" textClass="text-[12px]" />
            </Field>
          </section>

          <Section title="范围 1 的顶部">
            <div className="flex h-8 items-center">
              <span className="mr-[2px] flex h-full flex-1 items-center bg-[#ffe070]">选择对象 (0)</span>
              <PointBtn />
              <button aria-label="选择对象" className="flex h-8 w-8 items-center justify-center bg-[#ffe070]"><Target /></button>
            </div>
            <div className="flex h-[23px] items-center">
              <span className="w-[41px]">ZC</span>
              <Num label="ZC" v="-3.00000" neg />
              <span className="mr-[5px] ml-auto">抬高或降低</span>
              <Num label="抬高或降低" v="0.00000" />
            </div>
          </Section>

          <Section title="范围定义">
            <Field h="h-8" label="选择对象 (0)">
              <PointBtn />
              <button aria-label="选择范围对象" className={sq}><Target /></button>
            </Field>
            <div className="flex h-[23px] items-center">
              <span className="w-[51px]">范围深度</span>
              <Num label="范围深度" v="2.80000" />
              <span className="mr-[5px] ml-auto">抬高或降低</span>
              <Num label="范围抬高或降低" v="0.00000" />
            </div>
            <Field label="抬高或降低(全局)"><Num label="抬高或降低(全局)" v="0.00000" /></Field>
            <Field h="h-[25px]" label="测量开始位置">
              <Combo label="测量开始位置" value="顶层" className="h-[25px] w-[141px]" textClass="text-[12px]" />
            </Field>
            <Field label="每刀切削深度"><Num label="每刀切削深度" v="0.12000" /></Field>
            <div className="flex h-[100px] justify-between">
              <div className="w-[420px] border border-[#efdcf0] p-px">
                <table className="w-full table-fixed border-separate border-spacing-0 text-left">
                  <thead>
                    <tr className="h-[21px]">
                      {[["范围", "w-[60px]"], ["范围深度", "w-[80px]"], ["每刀切削深度", "w-[100px]"], ["", ""]].map(([h, w]) => (
                        <th key={h} className={"border-r border-b border-[#d8d8d8] p-0 pl-[6px] leading-5 font-normal last:border-r-0 " + w}>{h}</th>
                      ))}
                    </tr>
                  </thead>
                  <tbody>
                    {[20, 21, 22, 23].map((k) => (
                      <tr key={k} className={(k === 23 ? "h-[15px] " : "h-[20px] ") + (k % 2 ? "bg-[#f4f4f4]" : "bg-[#fbfbfb]")}>
                        {[0, 1, 2, 3].map((c) => <td key={c} className={"border-r border-[#e2e2e2] p-0 last:border-r-0 " + (k === 23 ? "" : "border-b")} />)}
                      </tr>
                    ))}
                  </tbody>
                </table>
              </div>
              <div className="flex flex-col gap-[2px]">
                <button aria-label="添加新集" className={sq}>
                  <Svg s={26}><path d="M5 1V9M1 5H9" stroke="#2360c9" strokeWidth="2.600" /><circle cx="15" cy="14" r="4" stroke={red} strokeWidth="1.500" /><path d="M15 6V22M7 14H23" stroke="#7a1414" strokeWidth="1.200" /></Svg>
                </button>
                <button aria-label="移除" className={sq}>
                  <Svg s={20}><path d="M2 3L6 2L22 21L20 22Z" fill="#333" /><path d="M20 2L22 4L7 22L3 22Z" fill="#333" /></Svg>
                </button>
                <button aria-label="列表" className={sq}><i className="h-[18px] w-[18px] border border-black bg-white" /></button>
              </div>
            </div>
          </Section>

          <Section title="在上一个范围之下切削" open>
            <Field label="距离">
              <Num label="距离" v="0.00000" />
              <Combo label="距离单位" value="%刀具直径" className="ml-[3px] h-[23px] w-[62px]" textClass="text-[12px] pr-4" />
            </Field>
          </Section>
        </div>
        <div className="ml-[2px] flex w-[15px] flex-col items-center bg-[#efefef]">
          <div className="flex h-[17px] items-center"><Svg s={11}><path d="M2 17L12 7L22 17" stroke="#444" strokeWidth="4" /></Svg></div>
          <div className="h-[498px] w-full bg-[#a6a6a6]" />
          <div className="flex flex-1 items-end pb-1"><Svg s={11}><path d="M2 7L12 17L22 7" stroke="#444" strokeWidth="4" /></Svg></div>
        </div>
      </div>
      <div className="flex justify-end gap-[5px] pt-2 pr-[15px]">
        <button className="h-[25px] w-[54px] bg-[#72b3ca] text-white">确定</button>
        <button className="h-[25px] w-[54px] border border-[#9a9a9a] bg-[#e2e2e2]">取消</button>
      </div>
    </div>
  );
}

const tee = <path d="M5 13V23M5 18H12M14 12H24" stroke="#111d55" strokeWidth="1.4" />;
const resource: { n: string; d: ReactNode; gap?: boolean; on?: boolean }[] = [
  { n: "装配导航器", d: <Svg s={26}>{tee}<path d="M2 3L5 1L9 2V6L13 7V11L9 13L5 12L2 11Z" fill="#f3c52c" stroke="#a37a10" /><path d="M5 12V7L9 6M2 3L5 4V7" stroke="#a37a10" /><path d="M13 17L17 15L21 16V20L17 23L13 21Z" fill="#f3b52c" stroke="#a3700a" /></Svg> },
  { n: "约束导航器", d: <Svg s={24}><path d="M3 0L11 5L3 10ZM21 0L13 5L21 10Z" fill="#1a1aa8" /><path d="M12 0V24" stroke="#000" strokeDasharray="3 1" /><path d="M1 13H9V22H1Z" fill="#f7e25c" stroke="#6a5a00" /><path d="M14 13L23 22H14Z" fill="#c81c1c" stroke="#700" /></Svg> },
  { n: "部件导航器", d: <Svg s={24}>{tee}<path d="M1 3Q6 0 10 3V10Q6 13 1 10Z" fill="#c06a9c" stroke="#7a2a5c" /><ellipse cx="5.500" cy="3" rx="4.500" ry="1.800" fill="#e6aecd" stroke="#7a2a5c" /><circle cx="17" cy="19" r="4" fill="#fff" stroke="#9a3a7c" strokeWidth="1.300" /><circle cx="17" cy="19" r="1.200" fill="#9a3a7c" /></Svg> },
  { n: "工序导航器", on: true, d: <Svg s={24}>{tee}<path d="M3 1H7V8H9L5 13L1 8H3ZM9 2H18L14 4H9ZM9 6H14L11 8H9Z" fill="#4f94d8" stroke="#285d9c" strokeWidth=".6" /><path d="M14 15L18 16V20H21V23H14Z" fill="#fff" stroke="#3f7dbb" strokeWidth="1.300" /></Svg> },
  { n: "机床导航器", d: <Svg s={24}><path d="M1 8L16 1V17L1 21ZM1 12L16 6M1 16L16 11M6 6V19M11 3V18" stroke="#7d7d9c" fill="#f9e4c8" /><path d="M7 15L14 12L24 14V20L16 24L7 20Z" fill="#f08b2c" /><path d="M16 18L24 14V20L16 24Z" fill="#3c7dd0" /></Svg> },
  { n: "加工特征", d: <Svg s={24}><path d="M1 8H6V21H1ZM7 7H12V21H7ZM13 8H16V21H13Z" fill="#c4c9cf" stroke="#444" /><path d="M15 3L19 1L23 3V7L19 9L15 7Z" fill="#f08b2c" stroke="#994a00" /><path d="M5 5L12 2M2 23H21L23 15L18 18" stroke="#555" strokeWidth="1.500" /></Svg> },
  { n: "重用库", d: <Svg s={24}><path d="M1 7L6 1H11L7 7V23H1Z" fill="#f08226" /><path d="M7 7L12 1H17L13 7V23H7Z" fill="#34b53c" /><path d="M13 7L18 1H24V18L19 23H13Z" fill="#3b7fdb" /><path d="M2 7L7 2H10L6 7ZM8 7L13 2H16L12 7ZM14 7L19 2H23L18 7Z" fill="#fff" /><path d="M1 11H19M1 19H19M19 7V23" stroke="#345" strokeWidth=".9" /></Svg> },
  { n: "HD3D工具", gap: true, d: <Svg s={26}><circle cx="9" cy="15" r="8" fill="#2c72cf" stroke="#184a96" /><path d="M8 9H11V11H8ZM7 13H11V19H12.500V20H6.500V19H8V14H7Z" fill="#fff" /><path d="M8 1Q23 0 23 16M9 4Q20 4 20 15" stroke="#4468b8" strokeWidth="2" /></Svg> },
  { n: "网页浏览器", gap: true, d: <Svg s={24}><path d="M3 1H15L21 7V23H3Z" fill="#fff" stroke="#3c50a8" strokeWidth="1.500" /><path d="M15 1V7H21" fill="#dfe6ff" stroke="#3c50a8" /><circle cx="12" cy="15" r="5.500" fill="#2f9a6c" stroke="#1f6a8c" /><path d="M12 11L15 17H9Z" fill="#a9d7f0" /></Svg> },
  { n: "历史记录", gap: true, d: <Svg s={24}><circle cx="12" cy="12" r="10.500" fill="#dce8f5" stroke="#777" strokeWidth="2" /><path d="M12 5V12H18" stroke="#222" strokeWidth="2" /><circle cx="12" cy="12" r="8" stroke="#555" strokeDasharray="1 3.200" /></Svg> },
  { n: "系统材料", d: <Svg s={24}><path d="M3 1H11V5H3Z" fill="#f0301c" /><path d="M3 5H11V9H3Z" fill="#f7d61c" /><path d="M3 9H11V13H3Z" fill="#6be01c" /><path d="M3 13H11V18H3Z" fill="#1cd6d0" /><path d="M3 18H11V23H3Z" fill="#1c35e0" /><path d="M13 8L20 21" stroke="#111" strokeWidth="3.500" /><circle cx="12" cy="6" r="3" fill="#fff6b0" /></Svg> },
  { n: "加工向导", d: <Svg s={24}><path d="M9 3L13 1L20 3L21 6L16 4L12 7L9 13L16 18L18 22L9 22L3 21V15L7 14L11 6Z" stroke="#555" strokeWidth="1.400" fill="#d8d4dc" /><path d="M6 15L14 20M5 18L9 13" stroke="#555" /><path d="M3 17H8V22H3Z" fill="#f0a030" /></Svg> },
  { n: "角色", d: <Svg s={25}><path d="M1 1H23V23H1Z" fill="#fff" stroke="#12355c" strokeWidth="1.500" /><path d="M3 4H9V9H3ZM16 4H21V9H16Z" fill="#5a78cf" /><path d="M10 6H14M10 18H14M4 14H7L9 16V21H4Z" stroke="#1c2b8a" strokeWidth="1.300" /><path d="M15 14H21V21H15Z" fill="#8aa66c" stroke="#222" /></Svg> },
];

function ResourceBar() {
  return (
    <aside className="flex w-8 shrink-0 flex-col border-r border-[#b4a3b5] bg-[#f9d0f9]">
      <button aria-label="资源条选项" className="mb-4 flex h-[26px] items-center justify-center pr-[2px]">
        <Svg s={14}><circle cx="12" cy="12" r="7.500" stroke="#333" strokeWidth="2.500" /><circle cx="12" cy="12" r="1.500" fill="#333" /><path d="M12 1V5M12 19V23M1 12H5M19 12H23M4 4L7 7M17 17L20 20M20 4L17 7M4 20L7 17" stroke="#333" strokeWidth="2.500" /></Svg>
      </button>
      {resource.map((r) => (
        <button
          key={r.n}
          aria-label={r.n}
          className={"flex h-[42px] shrink-0 items-center justify-center " + (r.gap ? "mt-3 " : "") + (r.on ? "-mr-px ml-[2px] border border-r-0 border-[#999] bg-[#f0f0f0] pl-[2px]" : "pl-[5px]")}
        >
          {r.d}
        </button>
      ))}
    </aside>
  );
}

const side: { t: string; d: ReactNode; on?: boolean; gap?: string }[] = [
  { t: "建模", d: <><path d="M3 4L9 1L13 3V12L22 12V17L12 22L3 18Z" fill="#bcbcbc" stroke="#999" /><path d="M3 4L9 1L13 3L7 6ZM9 15L14 12L22 12L13 17Z" fill="#e3e3e3" /></> },
  { t: "制图", gap: "mt-2", d: <><path d="M9 7L14 1L19 4L17 8L22 11L20 16L12 12" fill="#f4f4f4" stroke="#999" strokeWidth="1.400" /><path d="M1 17L9 6L12 8L7 11L23 20L22 23L6 14Z" fill="#bdbdbd" stroke="#999" strokeWidth=".8" /></> },
  { t: "测量距离", on: true, gap: "mt-[14px]", d: <><path d="M1 1V10M23 1V10M2 5H22M6 2L2 5L6 8M18 2L22 5L18 8" stroke="#23237a" strokeWidth="1.600" /><path d="M1 14H23V21H1Z" fill="#eec94a" stroke="#8a6d14" /><path d="M5 14V17M9 14V17M13 14V17M17 14V17M20 14V17" stroke="#6a5210" /></> },
  { t: "优化面", gap: "mt-2", d: <><Cube t="#e6e6e6" l="#d0d0d0" r="#dadada" k="#a5a5a5" /><path d="M14 11L21 22M12 13L17 9M15 8L12 10" stroke="#999" strokeWidth="1.800" /></> },
  { t: "局部半径", on: true, gap: "mt-2", d: <><path d="M1 13L8 8L16 11V19L8 23L1 19Z" fill="#9db5f5" stroke="#3a4fae" /><path d="M5 0H15V9H5Z" fill="#fff" stroke="#222b80" /><path d="M9 1H11V3H9ZM8 4H11V7H12V8H8V7H9V5H8Z" fill="#222b80" /><path d="M6 15L11 11L17 13L10 18ZM17 12L23 5H15" stroke="#c01c3c" strokeWidth="1.400" /></> },
  { t: "后处理", gap: "mt-2", d: <><path d="M1 2H17V21H1Z" fill="#e6e6e6" stroke="#aaa" /><path d="M4 19V14M8 19V16M12 19V13M3 6H14M3 10H14" stroke="#aaa" strokeWidth="1.500" strokeDasharray="2 1" /><path d="M13 10H18V13L23 16L18 20V23H13Z" fill="#c4c4c4" stroke="#aaa" /></> },
  { t: "打开部件目录", gap: "mt-[10px]", d: <><path d="M1 14L6 2L16 1L20 5L10 8L3 17Z" fill="#f4f4f4" stroke="#aaa" strokeWidth="1.200" /><path d="M3 17L11 10L20 9V13M13 17L17 15V11L23 13V22H13Z" fill="#d6d6d6" stroke="#999" /></> },
  { t: "保存并退出", on: true, gap: "mt-2", d: <><path d="M1 1H23V23H1Z" fill="#eef2ff" stroke="#10206b" strokeWidth="1.800" /><path d="M4 4H16V11H4ZM4 14H8V20H4ZM10 14H14V20H10ZM16 14H20V20H16Z" stroke="#17297f" strokeWidth="1.600" fill="#fff" /></> },
];

function SideToolbar() {
  return (
    <aside className="flex w-[35px] shrink-0 flex-col items-center border-l border-[#8d8d8d] bg-[#f0f0f0] pt-[10px] pr-px">
      {side.map((s) => (
        <button key={s.t} className={"flex flex-col items-center gap-[5px] text-[11px] leading-[14px] " + (s.on ? "text-black " : "text-[#8f8f8f] ") + (s.gap ?? "")}>
          <Svg s={23}>{s.d}</Svg>
          <span className="[text-orientation:sideways] [writing-mode:vertical-rl]">{s.t}</span>
        </button>
      ))}
      <span className="mt-2 h-px w-[26px] bg-[#ecd8ee]" />
      <svg width="4" height="6" className="mt-auto mr-[14px] mb-[6px]" aria-hidden="true"><path d="M4 0V6L0 3Z" fill="#111" /></svg>
    </aside>
  );
}

function Viewport() {
  const starts = [0, 93, 184, 275];
  const edge = { stroke: "#222c2e", strokeWidth: 1, vectorEffect: "non-scaling-stroke" as const, strokeLinejoin: "round" as const };
  const ln = { fill: "none", vectorEffect: "non-scaling-stroke" as const };
  return (
    <section className="flex min-w-0 flex-1 flex-col border-b border-[#9c9c9c] bg-[#f0f0f0]">
      <div className="flex h-[22px]">
        <button className="flex w-[197px] items-center gap-[6px] bg-[#e682f9] pl-[5px] text-[12px] whitespace-nowrap text-white">
          <Svg s={15}><path d="M4 1H10V14H4Z" fill="#2b5bb5" stroke="#123" /><path d="M4 16H10L7 23Z" fill="#e8cf8a" /><path d="M13 6H23M13 10H19" stroke="#335" strokeWidth="2" /></Svg>
          一级牵引夹紧块_step.prt
          <Svg s={11}><path d="M3 2H15L21 8V22H3ZM8 12H16V18H8Z" stroke="#fff" strokeWidth="2.500" /></Svg>
        </button>
      </div>
      <div className="min-h-0 flex-1 overflow-hidden bg-linear-to-b from-[#b0b1b3] via-[#d0d1d2] via-45% to-[#e6e8e9] to-75%">
        <svg width="902" height="815" role="img" aria-label="零件与刀轨">
          <g transform="translate(42 118) scale(0.40816 0.33333)">
            <path d="M62 596L95 662L92 1098L55 1032Z" fill="#6f8185" {...edge} />
            <path d="M87 674L127 686L125 1050L85 1062Z" fill="#7b8c90" {...edge} />
            <path d="M127 688L868 303L862 662L125 1048Z" fill="#829296" {...edge} />
            <path d="M844 314L868 303L862 662L839 680Z" fill="#8b9a9e" {...edge} />
            <path d="M125 1045L839 680L870 660L908 661Q914 664 910 668L125 1072Q100 1082 87 1062Z" fill="#b9d0d7" {...edge} />
            <path d="M912 668L911 688L112 1096Q98 1104 88 1096L84 1064Q98 1084 125 1072Z" fill="#738589" {...edge} />
            <path d="M62 596L725 254L914 244Q920 245 915 250L125 660Q110 666 95 660Z" fill="#b9d0d7" {...edge} />
            <path d="M918 248V280L127 686Q110 694 95 686L95 662Q110 666 125 660Z" fill="#728488" {...edge} />
            {[[303, 762], [666, 577]].map(([x, y]) => (
              <g key={x}>
                <ellipse cx={x} cy={y} rx="13" ry="26" fill="#5b6a6e" {...edge} />
                <path d={`M${x - 12} ${y}L${x + 10} ${y - 12}Q${x + 12} ${y + 12} ${x + 2} ${y + 24}Q${x - 10} ${y + 20} ${x - 12} ${y}Z`} fill="#8fe6ee" />
              </g>
            ))}
            <path d="M457 440V200" stroke="#1545c8" strokeWidth="2" {...ln} />
            <path d="M460 145L451 203H469Z" fill="#1545c8" />
            <path d="M457 440L285 396" stroke="#2f8a2f" strokeWidth="2" {...ln} />
            <path d="M245 386L292 386L288 406Z" fill="#2f8a2f" />
            <path d="M457 440L570 384" stroke="#b02f36" strokeWidth="2" {...ln} />
            <path d="M600 369L564 374L574 392Z" fill="#b02f36" />
            <g stroke="#f01414" strokeWidth="3" strokeDasharray="8 8">
              <path d="M1470 80L150 757" {...ln} />
              <path d="M320 765L670 587" {...ln} />
              <path d="M320 765L388 790M682 580L742 600" {...ln} />
            </g>
            {starts.map((o, i) => (
              <g key={o} strokeWidth="3">
                <path d={`M228 ${866 + o}Q285 ${858 + o} 340 ${828 + o}L1050 ${461 + o}Q1085 ${445 + o} 1110 ${411 + o}`} stroke="#22eeee" {...ln} />
                <path d={`M1110 ${411 + o}C1160 ${335 + o} 1290 ${330 + o} 1464 ${337 + o}`} stroke="#f8c420" {...ln} />
                <path d={`M228 ${866 + o}C130 ${885 + o} 80 ${925 + o} 100 ${970 + o}Q115 ${1000 + o} 146 ${1015 + o}`} stroke={i < 2 ? "#fbdcec" : "#f0d6e2"} {...ln} />
              </g>
            ))}
            <path d="M1464 612V580" stroke="#f8c420" strokeWidth="3" {...ln} />
            <path d="M151 757L144 1258" stroke="#1414d8" strokeWidth="3" strokeDasharray="8 8" {...ln} />
            <path d="M1470 80L1463 585" stroke="#1414d8" strokeWidth="3" strokeDasharray="12 5" {...ln} />
          </g>
          <g fontFamily="Liberation Serif, serif" fontSize="11">
            <text x="212" y="164" fill="#3c50d8">ZM</text>
            <text x="141" y="242" fill="#3c8a3c">YM</text>
            <text x="273" y="238" fill="#c03a40">XM</text>
            <g stroke="#999" fill="#cfcfcf" fillOpacity=".6">
              <path d="M67 725L80 717L102 722V745L88 752L67 747Z" />
              <path d="M67 725L88 729L102 722M88 729V752M80 717V742L67 747M80 742L102 745" fill="none" />
            </g>
            <path d="M65 748L88 739" stroke="#d49a9a" />
            <path d="M65 748L93 754" stroke="#1545c8" strokeWidth="2" />
            <path d="M102 757L91 750V757Z" fill="#1545c8" />
            <path d="M65 748L66 716" stroke="#2f7a2f" strokeWidth="2" />
            <path d="M66 705L62 717H70Z" fill="#2f7a2f" />
            <circle cx="65" cy="748" r="4" fill="#e6e6e6" stroke="#999" strokeWidth=".6" />
            <text x="62" y="704" fill="#7a9a7a">Y</text>
            <text x="89" y="743" fill="#c99">X</text>
            <text x="103" y="762" fill="#6a7ad0">Z</text>
          </g>
        </svg>
      </div>
    </section>
  );
}

export default function App() {
  return (
    <div className="relative flex h-screen flex-col overflow-hidden bg-[#f0f0f0] font-['Noto_Sans','Noto_Sans_CJK_SC',sans-serif] text-[12px] text-[#222]">
      <TitleBar />
      <Tabs />
      <Ribbon />
      <SelectionBar />
      <main className="relative flex min-h-0 flex-1">
        <ResourceBar />
        <Navigator />
        <SideToolbar />
        <Viewport />
        <Dialog />
      </main>
      <footer>
        <div className="flex h-[22px] items-center justify-end border-t border-[#a3a3a3] pr-[55px]">
          <button aria-label="全屏显示"><Restore /></button>
        </div>
        <div className="flex h-2 overflow-hidden bg-[#1b1b1b] text-[11px] leading-3 text-white">
          <span className="ml-[345px] w-12 bg-[#4a4a4a]" />
          <span className="mt-[5px] mr-[76px] ml-auto">10:41</span>
        </div>
      </footer>
      <div className="absolute right-0 bottom-[13px] flex h-[42px] w-[14px] flex-col items-center justify-center rounded-l bg-[#3a3a3a]">
        <i className="h-px w-1 bg-[#f09a4a]" />
      </div>
      <p className="absolute right-0 bottom-0 font-['Liberation_Serif','Noto_Sans_CJK_SC',serif] text-[15px] leading-6 whitespace-nowrap text-[#f4f4f4] [text-shadow:-1px_-1px_0_#555]">UG爱好者论坛@￥举个栗子￥</p>
    </div>
  );
}
